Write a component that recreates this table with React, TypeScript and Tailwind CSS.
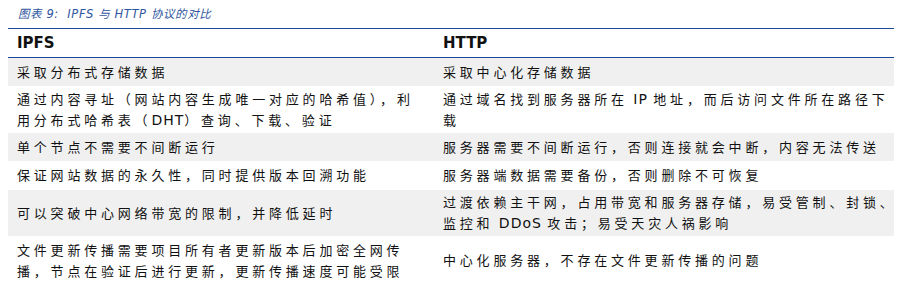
import React from 'react';

type Cell = { lines: string[]; justifyFirst?: boolean };
type Row = { left: Cell; right: Cell; shaded: boolean; h: string };

const rows: Row[] = [
  {
    left: { lines: ['采取分布式存储数据'] },
    right: { lines: ['采取中心化存储数据'] },
    shaded: true,
    h: 'h-[28px]',
  },
  {
    left: {
      lines: ['通过内容寻址（网站内容生成唯一对应的哈希值），利', '用分布式哈希表（DHT）查询、下载、验证'],
      justifyFirst: true,
    },
    right: { lines: ['通过域名找到服务器所在 IP 地址，而后访问文件所在路径下', '载'] },
    shaded: false,
    h: 'h-[47px]',
  },
  {
    left: { lines: ['单个节点不需要不间断运行'] },
    right: { lines: ['服务器需要不间断运行，否则连接就会中断，内容无法传送'] },
    shaded: true,
    h: 'h-[28px]',
  },
  {
    left: { lines: ['保证网站数据的永久性，同时提供版本回溯功能'] },
    right: { lines: ['服务器端数据需要备份，否则删除不可恢复'] },
    shaded: false,
    h: 'h-[29px]',
  },
  {
    left: { lines: ['可以突破中心网络带宽的限制，并降低延时'] },
    right: { lines: ['过渡依赖主干网，占用带宽和服务器存储，易受管制、封锁、', '监控和 DDoS 攻击；易受天灾人祸影响'] },
    shaded: true,
    h: 'h-[46px]',
  },
  {
    left: {
      lines: ['文件更新传播需要项目所有者更新版本后加密全网传', '播，节点在验证后进行更新，更新传播速度可能受限'],
      justifyFirst: true,
    },
    right: { lines: ['中心化服务器，不存在文件更新传播的问题'] },
    shaded: false,
    h: 'h-[49px]',
  },
];

// latin words (IP, DHT, DDoS) are set a bit larger and tighter than the CJK text
const renderLine = (line: string) =>
  line.split(/( ?[A-Za-z]+ ?)/).map((part, i) =>
    /[A-Za-z]/.test(part) ? (
      <span key={i} className="text-[14px] tracking-[1px]">
        {part}
      </span>
    ) : (
      <React.Fragment key={i}>{part}</React.Fragment>
    )
  );

const CellText = ({ cell }: { cell: Cell }) => (
  <div className="flex flex-col leading-[21px]">
    {cell.lines.map((line, i) => (
      <div
        key={i}
        className={
          i === 0 && cell.justifyFirst && cell.lines.length > 1
            ? 'whitespace-nowrap text-justify [text-align-last:justify]'
            : 'whitespace-nowrap'
        }
      >
        {renderLine(line)}
      </div>
    ))}
  </div>
);

export default function App() {
  return (
    <div className="w-[908px] h-[283px] overflow-hidden bg-white font-['DejaVu_Sans','Noto_Sans_CJK_SC',sans-serif] text-[#111]">
      <div className="h-[28px] pl-[18px] pt-[6px] text-[11.5px] italic tracking-[0.6px] leading-[16px] text-[#2f56a0]">
        图表 9:&nbsp; IPFS 与 HTTP 协议的对比
      </div>

      <div className="ml-[8px] w-[886px] border-t-[1.5px] border-[#1b4a98]">
        <div className="grid grid-cols-[426px_460px] h-[29px] items-center border-b-[1.5px] border-[#1b4a98] text-[15px] font-bold">
          <div className="pl-[9px]">IPFS</div>
          <div className="pl-[9px]">HTTP</div>
        </div>

        {rows.map((row, i) => (
          <div
            key={i}
            className={`grid grid-cols-[426px_460px] ${row.h} text-[13px] tracking-[3.8px] ${
              row.shaded ? 'bg-[#f0f0f0]' : 'bg-white'
            }`}
          >
            <div className="flex items-center pl-[9px] pr-[1px]">
              <CellText cell={row.left} />
            </div>
            <div className="flex items-center pl-[9px] pr-[6px]">
              <CellText cell={row.right} />
            </div>
          </div>
        ))}
      </div>
    </div>
  );
}
